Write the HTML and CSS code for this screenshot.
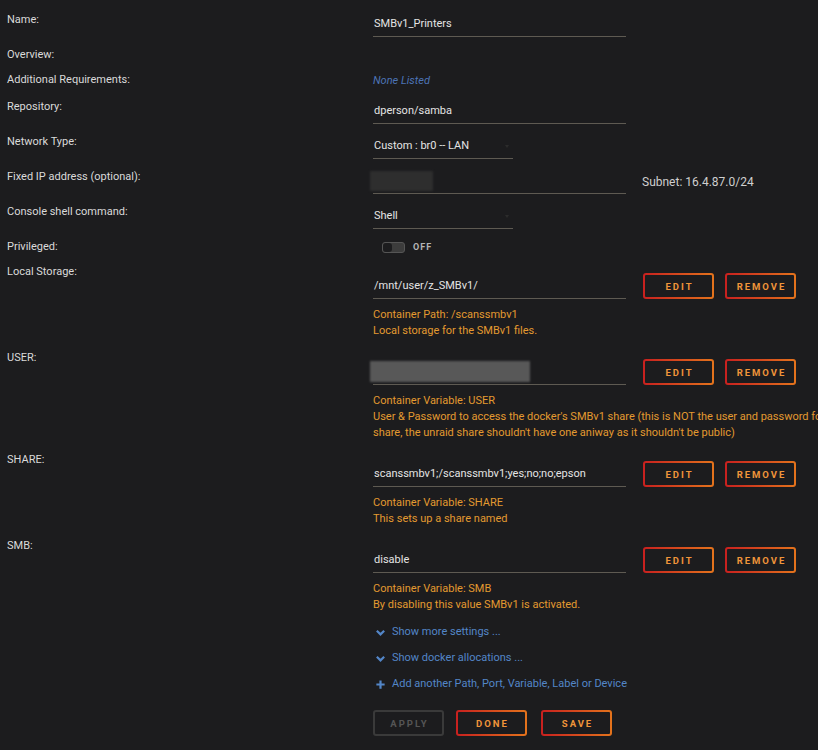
FILE: index.html
```html
<!DOCTYPE html>
<html lang="en">
<head>
    <meta charset="UTF-8">
    <title>Update Container</title>
    <link rel="stylesheet" href="styles.css">
</head>
<body>
    <div class="form">
        <div class="row input-row">
            <div class="label">Name:</div>
            <div class="value"><div class="input wide">SMBv1_Printers</div></div>
        </div>
        <div class="row plain">
            <div class="label">Overview:</div>
            <div class="value"></div>
        </div>
        <div class="row plain tall">
            <div class="label">Additional Requirements:</div>
            <div class="value"><span class="none">None Listed</span></div>
        </div>
        <div class="row input-row">
            <div class="label">Repository:</div>
            <div class="value"><div class="input wide">dperson/samba</div></div>
        </div>
        <div class="row input-row">
            <div class="label">Network Type:</div>
            <div class="value"><div class="input select">Custom : br0 -- LAN<span class="caret"></span></div></div>
        </div>
        <div class="row input-row">
            <div class="label">Fixed IP address (optional):</div>
            <div class="value inline">
                <div class="input wide"><span class="blur ip"></span></div>
                <span class="subnet">Subnet: 16.4.87.0/24</span>
            </div>
        </div>
        <div class="row input-row">
            <div class="label">Console shell command:</div>
            <div class="value"><div class="input select">Shell<span class="caret"></span></div></div>
        </div>
        <div class="row plain">
            <div class="label">Privileged:</div>
            <div class="value switch-line">
                <span class="switch"><span class="knob"></span></span>
                <span class="switch-text">OFF</span>
            </div>
        </div>

        <div class="row config">
            <div class="label">Local Storage:</div>
            <div class="value">
                <div class="field-line">
                    <div class="input wide">/mnt/user/z_SMBv1/</div>
                    <button class="btn">EDIT</button>
                    <button class="btn">REMOVE</button>
                </div>
                <div class="desc">Container Path: /scanssmbv1<br>Local storage for the SMBv1 files.</div>
            </div>
        </div>
        <div class="row config">
            <div class="label">USER:</div>
            <div class="value">
                <div class="field-line">
                    <div class="input wide"><span class="blur user"></span></div>
                    <button class="btn">EDIT</button>
                    <button class="btn">REMOVE</button>
                </div>
                <div class="desc">Container Variable: USER<br>User &amp; Password to access the docker's SMBv1 share (this is NOT the user and password for the unraid<br>share, the unraid share shouldn't have one aniway as it shouldn't be public)</div>
            </div>
        </div>
        <div class="row config">
            <div class="label">SHARE:</div>
            <div class="value">
                <div class="field-line">
                    <div class="input wide">scanssmbv1;/scanssmbv1;yes;no;no;epson</div>
                    <button class="btn">EDIT</button>
                    <button class="btn">REMOVE</button>
                </div>
                <div class="desc">Container Variable: SHARE<br>This sets up a share named</div>
            </div>
        </div>
        <div class="row config">
            <div class="label">SMB:</div>
            <div class="value">
                <div class="field-line">
                    <div class="input wide">disable</div>
                    <button class="btn">EDIT</button>
                    <button class="btn">REMOVE</button>
                </div>
                <div class="desc">Container Variable: SMB<br>By disabling this value SMBv1 is activated.</div>
            </div>
        </div>

        <div class="links">
            <a class="link"><svg width="11" height="11" viewBox="0 0 12 12"><polyline points="2,4 6,8 10,4" fill="none" stroke="currentColor" stroke-width="2.4"/></svg>Show more settings ...</a>
            <a class="link"><svg width="11" height="11" viewBox="0 0 12 12"><polyline points="2,4 6,8 10,4" fill="none" stroke="currentColor" stroke-width="2.4"/></svg>Show docker allocations ...</a>
            <a class="link"><svg width="11" height="11" viewBox="0 0 12 12"><path d="M6 1.5v9M1.5 6h9" fill="none" stroke="currentColor" stroke-width="2.4"/></svg>Add another Path, Port, Variable, Label or Device</a>
        </div>

        <div class="actions">
            <button class="btn disabled">APPLY</button>
            <button class="btn">DONE</button>
            <button class="btn save">SAVE</button>
        </div>
    </div>
</body>
</html>
```

FILE: styles.css
```css
html, body {
    margin: 0;
    background: #1c1c1e;
    overflow: hidden;
}
body {
    font-family: Roboto, "Liberation Sans", sans-serif;
    font-size: 11px;
    color: #d8d8d8;
}
.form {
    padding: 12px 0 0 7px;
    width: 1000px;
}
.row {
    display: grid;
    grid-template-columns: 366px auto;
    align-items: start;
}
.label {
    line-height: 16px;
    color: #dadada;
}
.input-row {
    margin-bottom: 10px;
}
.plain {
    min-height: 25px;
}
.plain.tall {
    min-height: 27px;
}
.none {
    display: block;
    line-height: 18px;
    color: #4c74b6;
    font-style: italic;
}
.input {
    position: relative;
    height: 24px;
    line-height: 24px;
    border-bottom: 1px solid #5e5a52;
    color: #e4e4e4;
    padding-left: 1px;
    box-sizing: content-box;
    white-space: nowrap;
}
.input.wide {
    width: 252px;
}
.input.select {
    width: 139px;
}
.caret {
    position: absolute;
    right: 4px;
    top: 11px;
    border-left: 2px solid transparent;
    border-right: 2px solid transparent;
    border-top: 3px solid #2c2c2c;
}
.value.inline {
    display: flex;
    align-items: center;
}
.subnet {
    margin-left: 16px;
    font-size: 12px;
    color: #cfcfcf;
}
.blur {
    position: absolute;
    left: -3px;
    filter: blur(1px);
}
.blur.ip {
    top: 2px;
    width: 63px;
    height: 20px;
    background: #2e2e2e;
}
.blur.user {
    top: 1px;
    width: 160px;
    height: 21px;
    background: #585858;
}
.switch-line {
    display: flex;
    align-items: center;
    height: 16px;
    padding-left: 9px;
}
.switch {
    display: inline-block;
    width: 21px;
    height: 9px;
    border: 1px solid #555;
    border-radius: 3px;
    background: #3c3c3c;
    position: relative;
}
.knob {
    position: absolute;
    left: 0;
    top: 0;
    width: 9px;
    height: 9px;
    border-radius: 3px;
    background: #1c1c1e;
}
.switch-text {
    margin-left: 8px;
    font-size: 9px;
    font-weight: bold;
    letter-spacing: 1px;
    color: #b4b4b4;
}
.config {
    margin-bottom: 11px;
}
.config .value {
    padding-top: 9px;
}
.field-line {
    display: flex;
    align-items: flex-end;
}
.field-line .btn {
    margin-left: 11px;
}
.field-line .input + .btn {
    margin-left: 17px;
}
.btn {
    width: 71px;
    height: 26px;
    padding: 0;
    border: 2px solid transparent;
    border-radius: 3px;
    background: linear-gradient(#1c1c1e, #1c1c1e) padding-box,
                linear-gradient(90deg, #c8201f, #e3731c) border-box;
    color: #f0953a;
    font-family: inherit;
    font-size: 9.5px;
    font-weight: bold;
    letter-spacing: 2px;
    text-indent: 2px;
}
.btn.disabled {
    background: #1c1c1e;
    border-color: #3a3a3a;
    color: #555;
}
.desc {
    margin-top: 8px;
    line-height: 16px;
    color: #e39a30;
    white-space: nowrap;
}
.links {
    padding-left: 366px;
}
.link {
    display: flex;
    align-items: center;
    gap: 6px;
    line-height: 16px;
    margin-bottom: 10px;
    color: #5386c8;
    padding-left: 2px;
}
.actions {
    padding: 8px 0 0 366px;
    display: flex;
    gap: 12px;
}
.actions .save {
    margin-left: 2px;
}
```
